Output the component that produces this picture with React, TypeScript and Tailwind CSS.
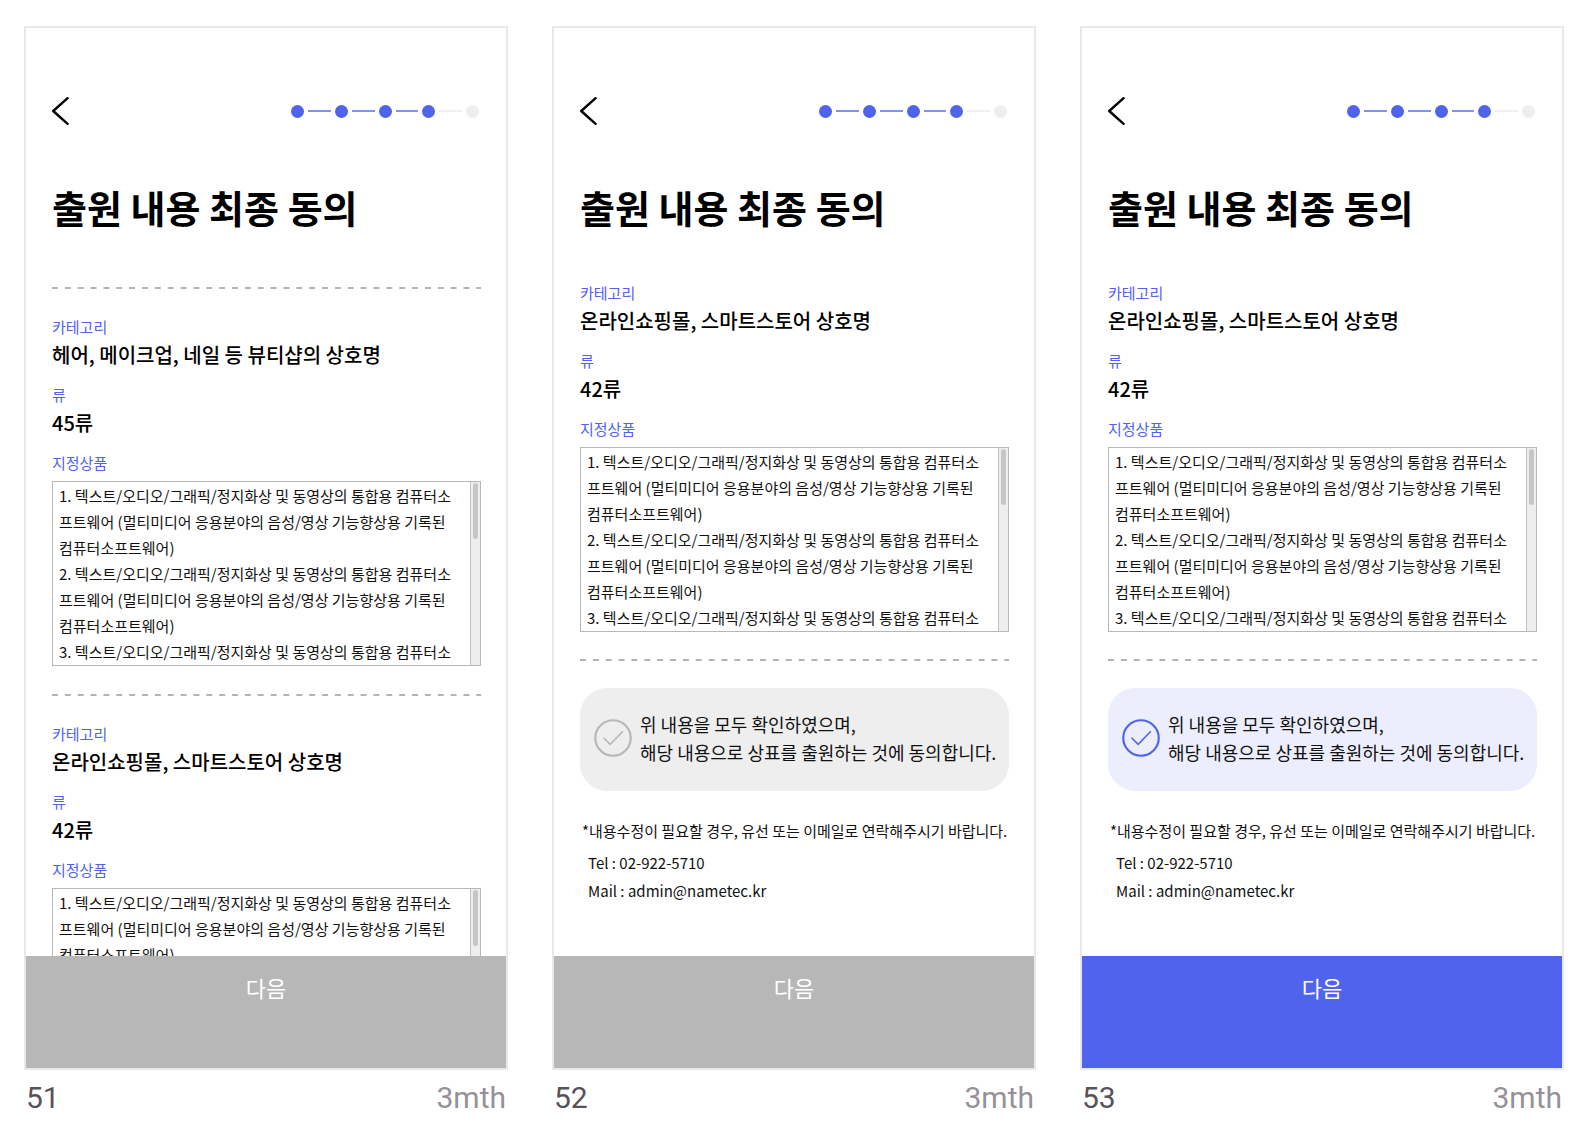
// src/App.tsx

import React, { useState } from "react";

interface Application {
    category: string;
    classNo: string;
}

interface ScreenProps {
    id: string;
    applications: Application[];
    scrolledToEnd?: boolean;
    defaultAgreed?: boolean;
}

const TOTAL_STEPS = 5;
const CURRENT_STEP = 4;

const BEAUTY: Application = {
    category: "헤어, 메이크업, 네일 등 뷰티샵의 상호명",
    classNo: "45류",
};

const ONLINE_STORE: Application = {
    category: "온라인쇼핑몰, 스마트스토어 상호명",
    classNo: "42류",
};

const GOODS = [
    "1. 텍스트/오디오/그래픽/정지화상 및 동영상의 통합용 컴퓨터소",
    "프트웨어 (멀티미디어 응용분야의 음성/영상 기능향상용 기록된",
    "컴퓨터소프트웨어)",
    "2. 텍스트/오디오/그래픽/정지화상 및 동영상의 통합용 컴퓨터소",
    "프트웨어 (멀티미디어 응용분야의 음성/영상 기능향상용 기록된",
    "컴퓨터소프트웨어)",
    "3. 텍스트/오디오/그래픽/정지화상 및 동영상의 통합용 컴퓨터소",
];

const StepIndicator: React.FC = () => (
    <div className="flex w-[188px] items-center gap-1">
        {Array.from({ length: TOTAL_STEPS }, (_, i) => (
            <React.Fragment key={i}>
                {i > 0 && (
                    <span
                        className={`h-[2px] flex-1 ${i < CURRENT_STEP ? "bg-[#8391f2]" : "bg-[#f1f1f1]"}`}
                    />
                )}
                <span
                    className={`size-[13px] rounded-full ${i < CURRENT_STEP ? "bg-[#4f63ed]" : "bg-[#eeeeee]"}`}
                />
            </React.Fragment>
        ))}
    </div>
);

const DashedRule: React.FC = () => (
    <hr className="h-[2px] border-0 bg-[linear-gradient(to_right,#b3b3b3_50%,transparent_50%)] bg-[length:3%_100%]" />
);

const GoodsBox: React.FC = () => (
    <div className="mt-2 flex h-[185px] border border-[#b7b7b7]">
        <div className="flex-1 overflow-hidden pt-px pl-[6px] text-[15px] leading-[26px] whitespace-nowrap text-[#111111]">
            {GOODS.map((line, i) => (
                <p key={i}>{line}</p>
            ))}
        </div>
        <div className="w-[10px] border-l border-[#c4c4c4] bg-[#eeeeee] px-[2px] pt-px">
            <div className="h-14 rounded-full bg-[#c6c6c6]" />
        </div>
    </div>
);

const ApplicationDetail: React.FC<Application> = ({ category, classNo }) => (
    <dl>
        <dt className="text-[15px] leading-5 text-[#4f63ed]">카테고리</dt>
        <dd className="mt-1 mb-4 text-xl leading-7 font-medium whitespace-nowrap">
            {category}
        </dd>
        <dt className="text-[15px] leading-5 text-[#4f63ed]">류</dt>
        <dd className="mt-1 mb-4 text-xl leading-7 font-medium">{classNo}</dd>
        <dt className="text-[15px] leading-5 text-[#4f63ed]">지정상품</dt>
        <dd>
            <GoodsBox />
        </dd>
    </dl>
);

interface ConsentCardProps {
    agreed: boolean;
    onChange: (agreed: boolean) => void;
}

const ConsentCard: React.FC<ConsentCardProps> = ({ agreed, onChange }) => (
    <label
        className={`relative flex h-[103px] cursor-pointer items-center gap-2 rounded-[27px] pb-[3px] pl-[14px] ${
            agreed ? "bg-[#eceefd]" : "bg-[#eeeeee]"
        }`}
    >
        <input
            type="checkbox"
            className="sr-only"
            checked={agreed}
            onChange={(e) => onChange(e.target.checked)}
        />
        <svg
            viewBox="0 0 39 39"
            fill="none"
            className={`size-[38px] shrink-0 ${agreed ? "text-[#4f63ed]" : "text-[#b7b7b7]"}`}
        >
            <circle cx="19.5" cy="19.5" r="18.2" stroke="currentColor" strokeWidth="2.2" />
            <path d="M9.8 19.2 L16.6 26 L29.6 12.6" stroke="currentColor" strokeWidth="1.6" />
        </svg>
        <span className="text-lg leading-7 whitespace-nowrap text-[#111111]">
            위 내용을 모두 확인하였으며,
            <br />
            해당 내용으로 상표를 출원하는 것에 동의합니다.
        </span>
    </label>
);

const Screen: React.FC<ScreenProps> = ({
    id,
    applications,
    scrolledToEnd = false,
    defaultAgreed = false,
}) => {
    const [agreed, setAgreed] = useState(defaultAgreed);

    return (
        <article className="flex min-h-0 flex-col">
            <div className="flex min-h-0 flex-1 flex-col border-2 border-[#e8e8e8] bg-white">
                <div className="min-h-0 flex-1 overflow-hidden pt-[69px] pr-[25px] pl-[26px]">
                    <header className="flex h-7 items-center justify-between pr-[2px]">
                        <button type="button" aria-label="뒤로">
                            <svg viewBox="0 0 18 28" fill="none" className="h-7 w-[18px]">
                                <path
                                    d="M15.6 1.2 L1.2 14 L15.6 26.8"
                                    stroke="#000"
                                    strokeWidth="2.4"
                                    strokeLinecap="round"
                                    strokeLinejoin="round"
                                />
                            </svg>
                        </button>
                        <StepIndicator />
                    </header>

                    <h1 className="mt-[62px] text-[38px] leading-10 font-bold">
                        출원 내용 최종 동의
                    </h1>

                    {scrolledToEnd ? (
                        <div className="mt-14">
                            {applications.map((item) => (
                                <ApplicationDetail key={item.classNo} {...item} />
                            ))}
                            <div className="my-[27px]">
                                <DashedRule />
                            </div>
                            <ConsentCard agreed={agreed} onChange={setAgreed} />

                            {/* Contact */}
                            <div className="mt-[26px] pl-[2px] text-[15px] leading-7 whitespace-nowrap text-[#111111]">
                                <p>*내용수정이 필요할 경우, 유선 또는 이메일로 연락해주시기 바랍니다.</p>
                                <address className="mt-1 pl-[6px] not-italic">
                                    <p>Tel : 02-922-5710</p>
                                    <p>Mail : admin@nametec.kr</p>
                                </address>
                            </div>
                        </div>
                    ) : (
                        <div className="mt-15">
                            {applications.map((item) => (
                                <React.Fragment key={item.classNo}>
                                    <DashedRule />
                                    <div className="my-7">
                                        <ApplicationDetail {...item} />
                                    </div>
                                </React.Fragment>
                            ))}
                        </div>
                    )}
                </div>

                <button
                    type="button"
                    disabled={!agreed}
                    className={`flex h-28 shrink-0 justify-center pt-[15px] text-[22px] leading-8 text-white ${
                        agreed ? "bg-[#4f63ed]" : "bg-[#b7b7b7]"
                    }`}
                >
                    다음
                </button>
            </div>

            <footer className="flex h-[52px] shrink-0 items-center justify-between px-[2px] pt-1 font-['Roboto',sans-serif] text-[30px] leading-9">
                <span className="text-[#57525a]">{id}</span>
                <span className="text-[#969198]">3mth</span>
            </footer>
        </article>
    );
};

const App: React.FC = () => (
    <main className="grid h-screen grid-cols-3 grid-rows-[minmax(0,1fr)] gap-11 bg-white pt-[26px] pr-[30px] pl-6 font-['Noto_Sans_CJK_KR',sans-serif] text-black">
        <Screen id="51" applications={[BEAUTY, ONLINE_STORE]} />
        <Screen id="52" applications={[ONLINE_STORE]} scrolledToEnd />
        <Screen id="53" applications={[ONLINE_STORE]} scrolledToEnd defaultAgreed />
    </main>
);

export default App;
